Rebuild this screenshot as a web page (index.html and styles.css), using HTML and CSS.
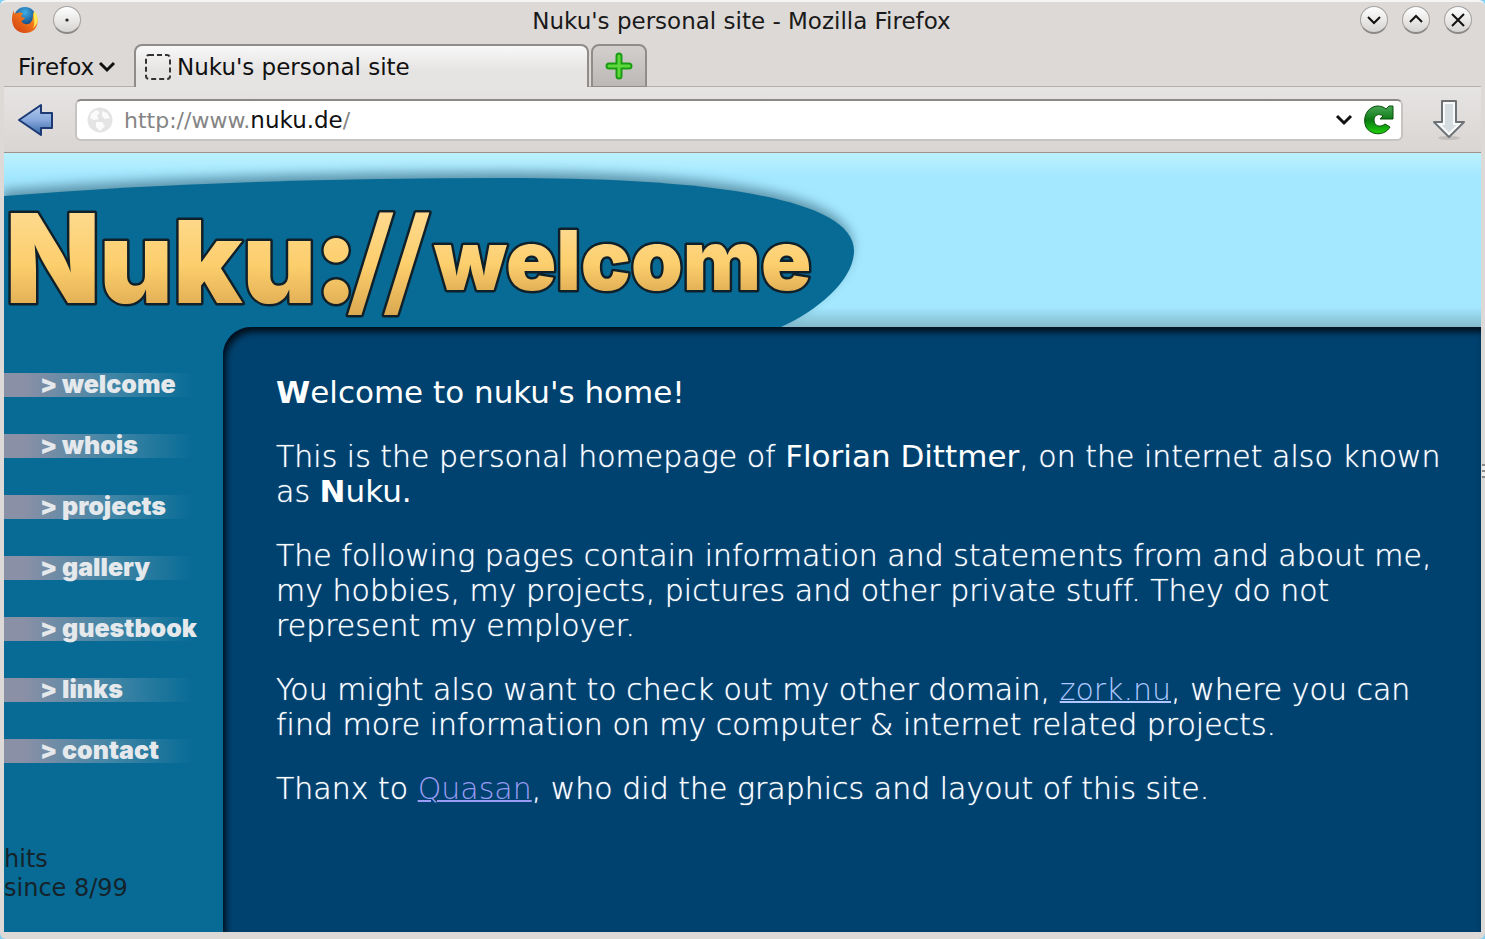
FILE: index.html
```html
<!DOCTYPE html>
<html lang="en">
<head>
    <meta charset="UTF-8">
    <meta name="viewport" content="width=device-width, initial-scale=1.0">
    <title>Nuku's personal site</title>
    <link rel="stylesheet" href="styles.css">
</head>
<body>
    <div class="window">
        <div class="titlebar">
            <div class="title-left">
                <svg class="fox" viewBox="0 0 28 28" aria-hidden="true">
                    <defs>
                        <radialGradient id="globe" cx="50%" cy="25%" r="70%">
                            <stop offset="0" stop-color="#3fb0ea"/>
                            <stop offset="1" stop-color="#0b2f6b"/>
                        </radialGradient>
                        <linearGradient id="tail" x1="1" y1="0" x2="0" y2="1">
                            <stop offset="0" stop-color="#ffe33a"/>
                            <stop offset=".4" stop-color="#f2761a"/>
                            <stop offset="1" stop-color="#cf3a12"/>
                        </linearGradient>
                    </defs>
                    <circle cx="14" cy="12" r="11" fill="url(#globe)"/>
                    <path d="M3 4 C3 6 3 7 3.5 7.5 L7 7 C9 6 10 7 12 7.5 C11 9 10 10 10.5 11 L14 12 C13 14 11 14 10.5 15.5 C13 19 18 19 20 16 C23 13 21 9 23 6 C28 10 28 19 23 24 C17 29 6 28 2.5 20 C0 15 1 8 3 4 Z" fill="url(#tail)"/>
                    <path d="M23 5 C28 10 28 18 22 22 C25 17 22 12 23 5 Z" fill="#ffe85a"/>
                </svg>
                <button class="round" aria-label="Window menu">
                    <svg viewBox="0 0 26 26"><circle cx="13" cy="13" r=".6"/></svg>
                </button>
            </div>
            <div class="title">Nuku's personal site - Mozilla Firefox</div>
            <div class="title-right">
                <button class="round" aria-label="Minimize">
                    <svg viewBox="0 0 26 26"><path d="M7 10 L13 16 L19 10"/></svg>
                </button>
                <button class="round" aria-label="Maximize">
                    <svg viewBox="0 0 26 26"><path d="M7 15 L13 9 L19 15"/></svg>
                </button>
                <button class="round" aria-label="Close">
                    <svg viewBox="0 0 26 26"><path d="M7 7 L19 19 M19 7 L7 19"/></svg>
                </button>
            </div>
        </div>

        <div class="tabbar">
            <button class="app-menu">Firefox<svg viewBox="0 0 18 12" aria-hidden="true"><path d="M2 2 L9 9 L16 2"/></svg></button>
            <button class="tab">
                <svg class="blank" viewBox="0 0 28 28" aria-hidden="true"><rect x="2" y="2" width="24" height="24" rx="3"/></svg>
                Nuku's personal site
            </button>
            <button class="new-tab" aria-label="New tab">
                <svg viewBox="0 0 28 28" aria-hidden="true">
                    <path d="M14 4 V24 M4 14 H24" stroke="#1a9c12" stroke-width="7" stroke-linecap="round"/>
                    <path d="M14 4 V24 M4 14 H24" stroke="#5fd83c" stroke-width="3" stroke-linecap="round"/>
                </svg>
            </button>
        </div>

        <div class="toolbar">
            <button class="tool" aria-label="Back">
                <svg class="back" viewBox="0 0 36 34" aria-hidden="true">
                    <defs>
                        <linearGradient id="blue" x1="0" y1="0" x2="0" y2="1">
                            <stop offset="0" stop-color="#b4caec"/>
                            <stop offset=".5" stop-color="#88a9dd"/>
                            <stop offset="1" stop-color="#3465a4"/>
                        </linearGradient>
                    </defs>
                    <path d="M1 17 L23 2 V10 H34 V25 H23 V32 Z" fill="url(#blue)" stroke="#1d3a75" stroke-width="2" stroke-linejoin="round"/>
                </svg>
            </button>
            <div class="address">
                <svg class="world" viewBox="0 0 26 26" aria-hidden="true">
                    <circle cx="13" cy="13" r="12.5" fill="#e4e4e4"/>
                    <path d="M4 7 L9 3 L13 5 L10 9 L12 12 L7 13 L3 11 Z M15 4 L20 6 L23 11 L18 12 L15 9 Z M9 15 L15 15 L18 19 L13 24 L9 20 Z" fill="#fbfbfb"/>
                </svg>
                <div class="url" role="textbox" aria-label="Address" contenteditable="true" spellcheck="false">http://www.<b>nuku.de</b>/</div>
                <button class="tool" aria-label="Show history">
                    <svg class="drop" viewBox="0 0 18 12" aria-hidden="true"><path d="M2 2 L9 9 L16 2"/></svg>
                </button>
                <button class="tool" aria-label="Reload">
                    <svg class="reload" viewBox="0 0 32 30" aria-hidden="true">
                        <defs>
                            <linearGradient id="green" x1="0" y1="0" x2="0" y2="1">
                                <stop offset="0" stop-color="#4aa656"/>
                                <stop offset=".5" stop-color="#0b7a12"/>
                                <stop offset="1" stop-color="#1fd00c"/>
                            </linearGradient>
                        </defs>
                        <path d="M23 4 L26 1 H30 V14 H17 L20 11 C16 8 11 10 11 15 C11 21 17 23 22 19 L27 22 C22 31 8 31 3 22 C-1 13 4 2 14 1 C18 1 21 2 23 4 Z" fill="url(#green)" stroke="#07500a" stroke-width="1"/>
                    </svg>
                </button>
            </div>
            <button class="tool" aria-label="Downloads">
                <svg class="down" viewBox="0 0 36 42" aria-hidden="true">
                    <ellipse cx="18" cy="39" rx="11" ry="2" fill="#c2bfbd"/>
                    <path d="M11 2 H25 V23 H33 L18 38 L3 23 H11 Z" fill="#d6dde1" stroke="#6c7275" stroke-width="2" stroke-linejoin="round"/>
                    <path d="M13 4 H23 V25 H28 L18 35 L8 25 H13 Z" fill="none" stroke="#f8fafa" stroke-width="2"/>
                </svg>
            </button>
        </div>

        <div class="page">
            <header class="banner">
                <svg class="logo" width="880" height="174" viewBox="0 0 880 174" role="img" aria-label="Nuku://welcome">
                    <defs>
                        <filter id="soft" x="-5%" y="-20%" width="110%" height="140%">
                            <feGaussianBlur stdDeviation="6"/>
                        </filter>
                        <linearGradient id="gold" x1="0" y1="0" x2="0" y2="1">
                            <stop offset="0" stop-color="#ffe0a0"/>
                            <stop offset=".55" stop-color="#fcce6c"/>
                            <stop offset="1" stop-color="#cf9b46"/>
                        </linearGradient>
                    </defs>
                    <path d="M0 43 C160 30 330 25 500 25 C640 25 850 34 850 98 C850 126 815 157 777 174 H0 Z" fill="#3c6f86" filter="url(#soft)" opacity=".7" transform="translate(-2 -6)"/>
                    <path d="M0 43 C160 30 330 25 500 25 C640 25 850 34 850 98 C850 126 815 157 777 174 H0 Z" fill="#076b95"/>
                    <g class="logo-text">
                        <text y="150"><tspan class="logo-cap" x="1">N</tspan><tspan class="logo-big" x="95">uku</tspan><tspan class="logo-cap" x="309">:</tspan><tspan class="logo-slash" x="344 380">//</tspan></text>
                        <text class="logo-small" x="430" y="137">welcome</text>
                    </g>
                </svg>
            </header>

            <div class="columns">
                <aside class="sidebar">
                    <nav>
                        <a href="#welcome"><span>&gt;</span>welcome</a>
                        <a href="#whois"><span>&gt;</span>whois</a>
                        <a href="#projects"><span>&gt;</span>projects</a>
                        <a href="#gallery"><span>&gt;</span>gallery</a>
                        <a href="#guestbook"><span>&gt;</span>guestbook</a>
                        <a href="#links"><span>&gt;</span>links</a>
                        <a href="#contact"><span>&gt;</span>contact</a>
                    </nav>
                    <p class="hits">hits<br>since 8/99</p>
                </aside>

                <main class="content" id="welcome">
                    <h1><b>W</b>elcome to nuku's home!</h1>
                    <p>This is the personal homepage of <strong>Florian Dittmer</strong>, on the internet also known as <strong><b>N</b>uku.</strong></p>
                    <p>The following pages contain information and statements from and about me, my hobbies, my projects, pictures and other private stuff. They do not represent my employer.</p>
                    <p>You might also want to check out my other domain, <a href="#zork">zork.nu</a>, where you can find more information on my computer &amp; internet related projects.</p>
                    <p>Thanx to <a class="visited" href="#quasan">Quasan</a>, who did the graphics and layout of this site.</p>
                </main>
            </div>
        </div>
    </div>
</body>
</html>
```
FILE: styles.css
```css
* {
    box-sizing: border-box;
}

body {
    margin: 0;
    background-color: #7fd0f5;
    font-family: "DejaVu Sans", Verdana, sans-serif;
}

button {
    padding: 0;
    border: none;
    background: none;
    color: #111;
    font-family: inherit;
    cursor: pointer;
}

svg {
    display: block;
    flex: none;
}

.window {
    position: relative;
    display: flex;
    flex-direction: column;
    min-height: 100vh;
    padding: 0 4px 7px;
    background-color: #dcd9d7;
    border-top: 2px solid #f6f5f5;
    border-radius: 6px;
}

/* Resize grip on the right edge */
.window::after {
    content: "";
    position: absolute;
    top: 50%;
    right: 0;
    width: 3px;
    height: 14px;
    margin-top: -7px;
    background: repeating-linear-gradient(#8d8a88 0 2px, #f0eeec 2px 6px);
}

/* Title bar */
.titlebar {
    display: grid;
    grid-template-columns: 1fr auto 1fr;
    align-items: center;
    height: 42px;
    padding: 0 9px 6px 7px;
}

.title-left,
.title-right {
    display: flex;
    align-items: center;
    gap: 14px;
}

.title-right {
    justify-content: flex-end;
}

.title {
    padding-top: 2px;
    font-size: 23px;
    color: #1a1a1a;
}

.fox {
    width: 28px;
    height: 28px;
}

.round {
    width: 28px;
    height: 28px;
    border: 1px solid #a5a2a0;
    border-bottom: 2px solid #8a8785;
    border-radius: 50%;
    background: linear-gradient(#ffffff, #d6d4d2);
}

.round svg {
    width: 100%;
    fill: none;
    stroke: #111;
    stroke-width: 2;
}

/* Tabs */
.tabbar {
    display: flex;
    align-items: stretch;
    height: 43px;
    box-shadow: inset 0 -1px #b3afac;
}

.app-menu {
    display: flex;
    align-items: center;
    gap: 4px;
    width: 130px;
    padding: 2px 0 0 14px;
    font-size: 23px;
}

.app-menu svg,
.drop {
    width: 18px;
    height: 12px;
    fill: none;
    stroke: #111;
    stroke-width: 3;
}

.tab {
    display: flex;
    align-items: center;
    gap: 5px;
    width: 455px;
    padding-left: 8px;
    border: 2px solid #8f8c8a;
    border-bottom: none;
    border-radius: 8px 8px 0 0;
    background: linear-gradient(#f8f8f8, #e6e4e3 60%);
    font-size: 23px;
}

.blank {
    width: 28px;
    height: 28px;
    fill: none;
    stroke: #333;
    stroke-width: 2;
    stroke-dasharray: 5 3;
}

.new-tab {
    display: flex;
    align-items: center;
    justify-content: center;
    width: 56px;
    margin-left: 2px;
    border: 2px solid #8f8c8a;
    border-bottom: 1px solid #8f8c8a;
    border-radius: 8px 8px 0 0;
    background: linear-gradient(#d2cfcd, #bcb8b6);
}

.new-tab svg {
    width: 28px;
    height: 28px;
}

/* Toolbar */
.toolbar {
    display: flex;
    align-items: center;
    height: 66px;
    padding: 0 14px;
    background: linear-gradient(#e6e4e3, #d9d5d3);
    border-bottom: 1px solid #a08f88;
}

.back {
    width: 36px;
    height: 34px;
}

.address {
    display: flex;
    flex: 1;
    align-items: center;
    height: 42px;
    margin: 0 28px 0 21px;
    padding: 0 6px 0 10px;
    border: 2px solid #c6c3c1;
    border-top-color: #8c8885;
    border-radius: 6px;
    background-color: #ffffff;
}

.world {
    width: 26px;
    height: 26px;
}

.url {
    flex: 1;
    margin-left: 11px;
    font-size: 22px;
    color: #858585;
    outline: none;
}

.url b {
    font-size: 23px;
    font-weight: normal;
    color: #111;
}

.reload {
    width: 32px;
    height: 30px;
    margin-left: 10px;
}

.down {
    width: 36px;
    height: 42px;
}

/* Page */
.page {
    display: flex;
    flex: 1;
    flex-direction: column;
    background-color: #076b95;
}

.banner {
    background: linear-gradient(#bbf1ff, #a4e8ff 24px, #a4e8ff 154px, #82b9cc);
    overflow: hidden;
}

.logo-text {
    font-family: Inter, "DejaVu Sans", sans-serif;
    font-weight: 900;
    fill: url(#gold);
    stroke: #10202a;
    stroke-width: 5px;
    stroke-linejoin: round;
    paint-order: stroke;
}

.logo-cap {
    font-size: 124px;
}

.logo-big {
    font-size: 114px;
}

.logo-slash {
    font-family: "DejaVu Sans", sans-serif;
    font-size: 124px;
    font-weight: 700;
}

.logo-small {
    font-size: 83px;
}

.columns {
    display: flex;
    flex: 1;
}

.sidebar {
    flex: none;
    width: 219px;
    padding-top: 46px;
}

.sidebar nav {
    display: flex;
    flex-direction: column;
    gap: 37px;
}

.sidebar nav a {
    display: flex;
    height: 24px;
    margin-right: 18px;
    padding-left: 36px;
    background: linear-gradient(to right, #8a90a6 20px, #3f85a6 110px, #076b95 190px);
    color: #e6e9ec;
    font-family: Inter, "DejaVu Sans", sans-serif;
    font-size: 25px;
    font-weight: 900;
    line-height: 22px;
    text-decoration: none;
}

.sidebar nav span {
    width: 22px;
}

.hits {
    margin: 82px 0 0;
    font-size: 24px;
    line-height: 29px;
    color: #15232b;
}

.content {
    flex: 1;
    padding: 48px 16px 40px 53px;
    border-radius: 28px 0 0 0;
    background-color: #00426f;
    box-shadow: inset 3px 5px 6px #000f1c;
    color: #ffffff;
    font-family: "DejaVu Sans Light", "DejaVu Sans", Verdana, sans-serif;
    font-size: 30px;
    font-variant-ligatures: none;
    font-weight: 200;
    line-height: 35px;
    text-shadow: 0 0 1px #cfe4f4;
}

.content h1,
.content strong {
    font-family: "DejaVu Sans", Verdana, sans-serif;
    font-size: 31px;
    font-weight: normal;
    text-shadow: none;
}

.content h1 {
    margin: 0 0 29px;
}

.content p {
    margin: 0 0 29px;
}

.content b {
    font-weight: bold;
}

.content a {
    color: #b0c8ff;
    text-decoration-thickness: 2px;
    text-shadow: none;
}

.content a.visited {
    color: #9a9cf5;
}
```
